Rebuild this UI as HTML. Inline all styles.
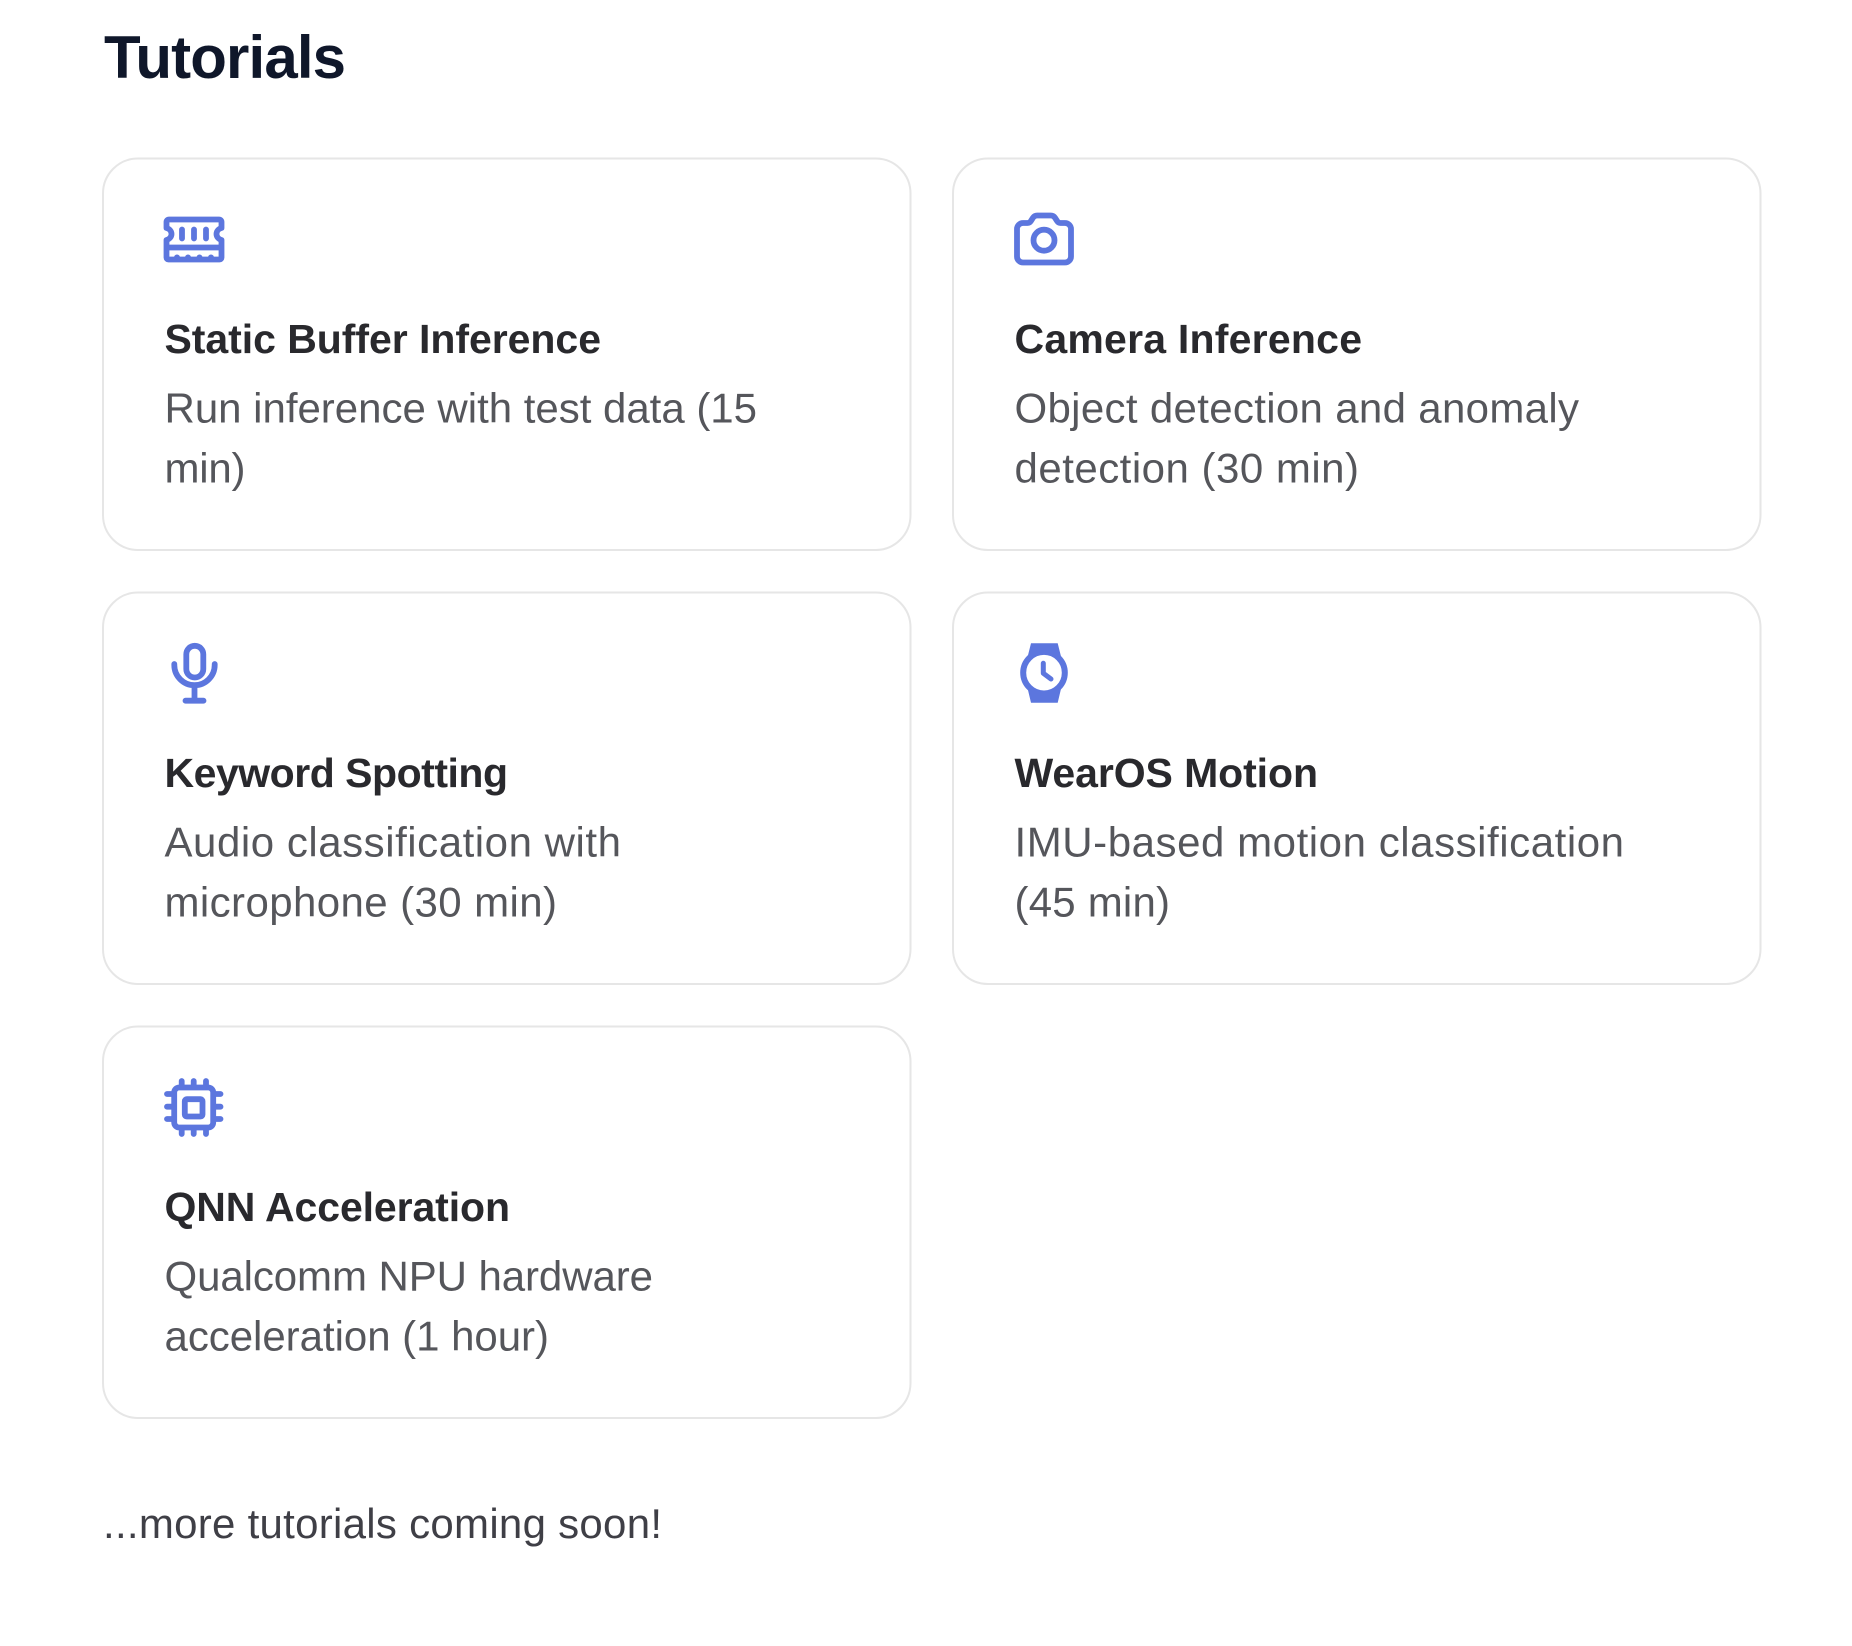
<!DOCTYPE html>
<html lang="en">
<head>
<meta charset="utf-8">
<title>Tutorials</title>
<style>
html,body{margin:0;padding:0;background:#fff;width:1852px;height:1646px;overflow:hidden}
svg{position:absolute;left:0;top:0;display:block}
text{font-family:"Liberation Sans",Arial,sans-serif}
.h{font-size:60px;font-weight:700;fill:#0f172a}
.t{font-size:41px;font-weight:700;fill:#29292d}
.d{font-size:42px;font-weight:400;fill:#55565b}
.f{font-size:42px;font-weight:400;fill:#3f3f46}
.card{fill:#fff;stroke:#e6e6e6;stroke-width:2}
.i{fill:none;stroke:#5c76de;stroke-width:5.8;stroke-linecap:round;stroke-linejoin:round}
</style>
</head>
<body>
<svg width="1852" height="1646" viewBox="0 0 1852 1646" xmlns="http://www.w3.org/2000/svg">
<text class="h" x="104" y="78" textLength="242" lengthAdjust="spacing">Tutorials</text>

<rect class="card" x="103" y="158.500" width="807.500" height="391.500" rx="35"/>
<rect class="card" x="953" y="158.500" width="807.500" height="391.500" rx="35"/>
<rect class="card" x="103" y="592.500" width="807.500" height="391.500" rx="35"/>
<rect class="card" x="953" y="592.500" width="807.500" height="391.500" rx="35"/>
<rect class="card" x="103" y="1026.500" width="807.500" height="391.500" rx="35"/>

<!-- RAM -->
<path class="i" d="M169 219.500H219a2.500 2.500 0 0 1 2.500 2.500V228c-3 .8-5 3.300-5 6s2 5.200 5 6v17.500a2 2 0 0 1-2 2H168.500a2 2 0 0 1-2-2V240c3-.8 5-3.300 5-6s-2-5.200-5-6V222a2.500 2.500 0 0 1 2.500-2.500z"/>
<path class="i" d="M168 247.500H220M182 229.500v9M194 229.500v9M206 229.500v9"/>
<g fill="#5c76de"><circle cx="177" cy="257.500" r="3"/><circle cx="188" cy="257.500" r="3"/><circle cx="199.500" cy="257.500" r="3"/><circle cx="211" cy="257.500" r="3"/></g>

<!-- Camera -->
<path class="i" d="M1023 223h4.500c1.500 0 2.600-.7 3.400-2l2.200-3.400c1-1.500 2.300-2.100 4-2.100h13.800c1.700 0 3 .6 4 2.100l2.200 3.400c.8 1.300 1.900 2 3.400 2H1065a6 6 0 0 1 6 6v27.500a6 6 0 0 1-6 6H1023a6 6 0 0 1-6-6V229a6 6 0 0 1 6-6z"/>
<circle class="i" cx="1044" cy="240.200" r="10.500"/>

<!-- Mic -->
<rect class="i" x="186.300" y="645.800" width="17" height="31.700" rx="8.500"/>
<path class="i" d="M174.300 664v1a20.200 20.200 0 0 0 40.400 0v-1M194.500 686v14.700M185.500 700.700h18"/>

<!-- Watch -->
<path fill="#5c76de" d="M1031 643.300h26.700l3.500 14h-33.700zM1027.500 688h33.700l-3.500 14.700h-26.700z"/>
<circle cx="1044" cy="672.700" r="20.800" fill="#fff" stroke="#5c76de" stroke-width="6"/>
<path class="i" style="stroke-width:5" d="M1043.300 663.300v10l7.700 5.700"/>

<!-- Chip -->
<rect class="i" x="174.200" y="1087.500" width="39" height="40" rx="5"/>
<rect class="i" x="184.800" y="1099.200" width="17.700" height="17.300" rx="2"/>
<path class="i" d="M181.700 1081v4M193.700 1081v4M206 1081v4M181.700 1130v4M193.700 1130v4M206 1130v4M167 1094h5M167 1106.700h5M167 1119h5M215.500 1094h5M215.500 1106.700h5M215.500 1119h5"/>

<!-- Card 1 -->
<text class="t" x="164.500" y="353" textLength="436.500" lengthAdjust="spacing">Static Buffer Inference</text>
<text class="d" x="164.500" y="422.500" textLength="592.500" lengthAdjust="spacing">Run inference with test data (15</text>
<text class="d" x="164.500" y="482.500" textLength="81" lengthAdjust="spacing">min)</text>

<!-- Card 2 -->
<text class="t" x="1014.500" y="353" textLength="347.500" lengthAdjust="spacing">Camera Inference</text>
<text class="d" x="1014.500" y="422.500" textLength="564.500" lengthAdjust="spacing">Object detection and anomaly</text>
<text class="d" x="1014.500" y="482.500" textLength="344.500" lengthAdjust="spacing">detection (30 min)</text>

<!-- Card 3 -->
<text class="t" x="164.500" y="787" textLength="343.500" lengthAdjust="spacing">Keyword Spotting</text>
<text class="d" x="164.500" y="856.500" textLength="456.500" lengthAdjust="spacing">Audio classification with</text>
<text class="d" x="164.500" y="916.500" textLength="392.500" lengthAdjust="spacing">microphone (30 min)</text>

<!-- Card 4 -->
<text class="t" x="1014.500" y="787" textLength="303.500" lengthAdjust="spacing">WearOS Motion</text>
<text class="d" x="1014.500" y="856.500" textLength="609.500" lengthAdjust="spacing">IMU-based motion classification</text>
<text class="d" x="1014.500" y="916.500" textLength="155.500" lengthAdjust="spacing">(45 min)</text>

<!-- Card 5 -->
<text class="t" x="164.500" y="1221" textLength="345.500" lengthAdjust="spacing">QNN Acceleration</text>
<text class="d" x="164.500" y="1290.500" textLength="488.500" lengthAdjust="spacing">Qualcomm NPU hardware</text>
<text class="d" x="164.500" y="1350.500" textLength="384.500" lengthAdjust="spacing">acceleration (1 hour)</text>

<text class="f" x="103" y="1538" textLength="559" lengthAdjust="spacing">...more tutorials coming soon!</text>
</svg>
</body>
</html>
